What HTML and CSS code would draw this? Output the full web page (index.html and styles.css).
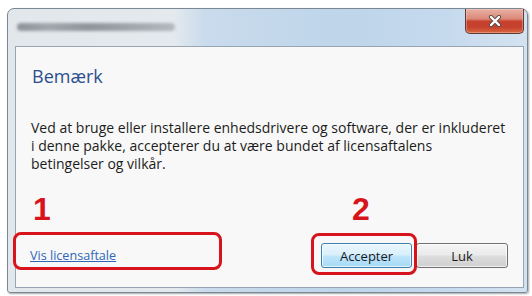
FILE: index.html
```html
<!DOCTYPE html>
<html lang="da">
<head>
<meta charset="utf-8">
<title>Bemærk</title>
<link rel="stylesheet" href="styles.css">
</head>
<body>
<div class="stage">
  <div class="window">
    <div class="titlebar">
      <div class="title-blur"></div>
      <button class="close" aria-label="Luk">
        <svg width="14" height="12" viewBox="0 0 14 12">
          <path d="M3 2 L11 10 M11 2 L3 10" stroke="#5a4a48" stroke-width="4.2" stroke-linecap="round"/>
          <path d="M3 2 L11 10 M11 2 L3 10" stroke="#ffffff" stroke-width="2.4" stroke-linecap="round"/>
        </svg>
      </button>
    </div>
    <div class="content">
      <h1 class="heading">Bemærk</h1>
      <p class="message">Ved at bruge eller installere enhedsdrivere og software, der er inkluderet<br>i denne pakke, accepterer du at være bundet af licensaftalens<br>betingelser og vilkår.</p>
      <div class="footer">
        <a class="link" href="#">Vis licensaftale</a>
        <div class="buttons">
          <button class="btn btn-focus">Accepter</button>
          <button class="btn">Luk</button>
        </div>
      </div>
    </div>
  </div>
  <div class="num num-1">1</div>
  <div class="num num-2">2</div>
  <div class="ring ring-1"></div>
  <div class="ring ring-2"></div>
</div>
</body>
</html>
```
FILE: styles.css
```css
html, body {
  margin: 0;
  padding: 0;
  background: #ffffff;
}
.stage {
  position: relative;
  width: 532px;
  height: 296px;
  overflow: hidden;
  padding: 8px 0 0 7px;
  box-sizing: border-box;
}
.window {
  width: 521px;
  height: 285px;
  box-sizing: border-box;
  border: 1px solid #7a8794;
  border-radius: 7px 7px 3px 3px;
  background: linear-gradient(to right, #e2e7ec 0%, #e4e9ee 32%, #c9dbec 38%, #bed5ea 65%, #c6daee 85%, #d4e2f0 100%);
  display: flex;
  flex-direction: column;
  padding: 0 3px 4px 7px;
  box-shadow: 1px 1px 2px rgba(0,0,0,0.35);
}
.titlebar {
  height: 37px;
  display: flex;
  align-items: flex-start;
  justify-content: space-between;
  flex-shrink: 0;
}
.title-blur {
  margin: 14px 0 0 2px;
  width: 158px;
  height: 8px;
  border-radius: 4px;
  background: linear-gradient(to right, #8c9298 0%, #a2a7ac 20%, #8e949a 45%, #9ea4aa 70%, #b4b9be 100%);
  filter: blur(1.6px);
}
.close {
  margin: 0;
  width: 59px;
  height: 25px;
  padding: 0;
  border: 1px solid #5e3a36;
  border-top: none;
  border-radius: 0 0 5px 5px;
  background: linear-gradient(to bottom, #e8b0a4 0%, #dc8a7a 40%, #c7402d 52%, #c4412e 75%, #d9683f 100%);
  display: flex;
  align-items: center;
  justify-content: center;
  box-shadow: inset 0 0 0 1px rgba(255,220,210,0.35);
}
.content {
  flex: 1;
  border: 1px solid #98a6b4;
  background: #f8f8f8;
  display: flex;
  flex-direction: column;
  padding: 0 15px 0 14px;
  font-family: "Open Sans", "Noto Sans", sans-serif;
}
.heading {
  margin: 17px 0 0 2px;
  font-size: 18px;
  font-weight: 400;
  line-height: 24px;
  color: #2b4f8c;
}
.message {
  margin: 31px 0 0 1px;
  font-size: 14px;
  line-height: 18px;
  color: #1c1c1c;
  white-space: nowrap;
}
.footer {
  margin-top: auto;
  margin-bottom: 19px;
  display: flex;
  align-items: center;
  justify-content: space-between;
}
.link {
  font-size: 12.6px;
  color: #2f66b8;
  text-decoration: underline;
  margin-left: 0;
}
.buttons {
  display: flex;
  gap: 4px;
}
.btn {
  width: 92px;
  height: 25px;
  box-sizing: border-box;
  border: 1px solid #707070;
  border-radius: 3px;
  background: linear-gradient(to bottom, #f4f4f4 0%, #ebebeb 48%, #dddddd 52%, #cfcfcf 100%);
  font-family: "Open Sans", "Noto Sans", sans-serif;
  font-size: 13px;
  color: #1a1a1a;
  padding: 0;
  box-shadow: inset 0 0 0 1px rgba(255,255,255,0.7);
}
.btn-focus {
  width: 91px;
  border-color: #3c7fb1;
  background: linear-gradient(to bottom, #eaf6fd 0%, #d9f0fc 48%, #bee6fd 52%, #a7d9f5 100%);
}
.num {
  position: absolute;
  font-family: "Liberation Sans", Arial, sans-serif;
  font-weight: 700;
  font-size: 32px;
  line-height: 32px;
  color: #d7141c;
}
.num-1 { left: 33px; top: 193px; }
.num-2 { left: 352px; top: 193px; }
.ring {
  position: absolute;
  box-sizing: border-box;
  border: 3px solid #d7141c;
  border-radius: 8px;
}
.ring-1 { left: 13px; top: 232px; width: 209px; height: 38px; }
.ring-2 { left: 311px; top: 233px; width: 106px; height: 42px; }
```
